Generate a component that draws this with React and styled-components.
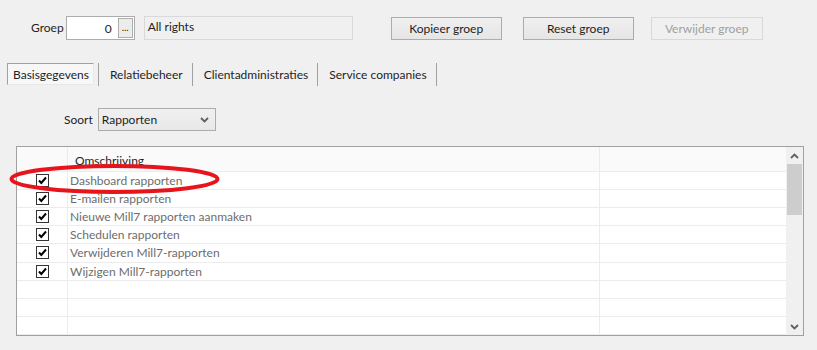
import React from 'react';
import styled, { createGlobalStyle } from 'styled-components';

const GlobalStyle = createGlobalStyle`
	body{
		margin: 0;
		background: #f0f0f0;
		font-family: Lato, "Noto Sans", sans-serif;
		font-size: 12px;
		color: #1e1e1e;
	}
`;

const Page = styled.div`
	width: 817px;
	height: 350px;
	padding-top: 16px;
	box-sizing: border-box;
	background: #f0f0f0;
`;

const TopRow = styled.div`
	display: flex;
	align-items: center;
	height: 24px;
	padding-left: 31px;
`;

const Label = styled.span`
	margin-right: ${p => p.gap || 3}px;
	line-height: 1;
`;

const NumberBox = styled.div`
	display: flex;
	align-items: center;
	justify-content: flex-end;
	width: 69px;
	height: 24px;
	box-sizing: border-box;
	border: 1px solid #acacac;
	background: #fff;
	padding: 1px;
	> .val{ margin-right: 6px; }
`;

const DotsButton = styled.div`
	width: 15px;
	height: 20px;
	box-sizing: border-box;
	border: 1px solid #adadad;
	background: #ececec;
	font-size: 10px;
	line-height: 16px;
	text-align: center;
`;

const ReadOnlyField = styled.div`
	width: 209px;
	height: 24px;
	margin-left: 9px;
	box-sizing: border-box;
	border: 1px solid #d9d9d9;
	padding-left: 3px;
	line-height: 20px;
`;

const Button = styled.div`
	width: ${p => p.w}px;
	height: 23px;
	margin-left: ${p => p.gap}px;
	box-sizing: border-box;
	border: 1px solid ${p => p.disabled ? '#d9d9d9' : '#acacac'};
	background: ${p => p.disabled ? '#f0f0f0' : 'linear-gradient(#f0f0f0, #e5e5e5)'};
	color: ${p => p.disabled ? '#a0a0a0' : '#1e1e1e'};
	text-align: center;
	line-height: 21px;
`;

const Tabs = styled.div`
	display: flex;
	align-items: stretch;
	height: 23px;
	margin-top: 23px;
	padding-left: 7px;
`;

const Tab = styled.div`
	display: flex;
	align-items: center;
	box-sizing: border-box;
	padding: ${p => p.active ? '0 4px 0 5px' : '0 9px 0 11px'};
	margin-right: ${p => p.active ? '4px' : '0'};
	border: ${p => p.active ? '1px solid #a0a0a0' : 'none'};
	border-right-color: ${p => p.active ? '#e8e8e8' : 'transparent'};
	border-bottom-color: ${p => p.active ? '#e8e8e8' : 'transparent'};
	background: ${p => p.active ? '#f7f7f7' : 'transparent'};
	height: ${p => p.active ? '22px' : '23px'};
	white-space: nowrap;
`;

const Sep = styled.div`
	width: 1px;
	background: #a0a0a0;
`;

const SortRow = styled.div`
	display: flex;
	align-items: center;
	margin-top: 22px;
	padding-left: 64px;
	height: 23px;
`;

const Select = styled.div`
	display: flex;
	align-items: center;
	justify-content: space-between;
	width: 118px;
	height: 23px;
	margin-left: 2px;
	box-sizing: border-box;
	border: 1px solid #acacac;
	background: linear-gradient(#f0f0f0, #e8e8e8);
	padding: 0 6px 0 3px;
`;

const GridWrap = styled.div`
	position: relative;
	margin: 15px 0 0 16px;
	width: 788px;
	height: 190px;
	box-sizing: border-box;
	border: 1px solid #a0a0a0;
	background: #fff;
	display: flex;
`;

const Table = styled.div`
	flex: 1;
	display: flex;
	flex-direction: column;
`;

const HeaderRow = styled.div`
	display: grid;
	grid-template-columns: 51px 532px 1fr;
	height: 24px;
	background: #fafafa;
	border-bottom: 1px solid #e6eef8;
	> div{ border-right: 1px solid #e3ecf8; }
	> div:last-child{ border-right: none; }
	> .title{
		padding-left: 7px;
		line-height: 28px;
	}
`;

const Row = styled.div`
	display: grid;
	grid-template-columns: 51px 532px 1fr;
	height: 18px;
	border-bottom: 1px solid #ececec;
	color: #6d6d6d;
	> div{ border-right: 1px solid #ececec; }
	> div:last-child{ border-right: none; }
	> .check{
		display: flex;
		align-items: center;
		justify-content: center;
		padding-left: 1px;
	}
	> .text{
		padding-left: 2px;
		line-height: 17px;
	}
`;

const CheckBox = styled.div`
	width: 13px;
	height: 13px;
	box-sizing: border-box;
	border: 1px solid #333;
	background: #fff;
	display: flex;
	align-items: center;
	justify-content: center;
`;

const Scrollbar = styled.div`
	width: 17px;
	background: #f0f0f0;
	display: flex;
	flex-direction: column;
	align-items: center;
	> .arrow{
		height: 17px;
		display: flex;
		align-items: center;
		justify-content: center;
	}
	> .thumb{
		width: 15px;
		height: 51px;
		background: #cdcdcd;
	}
	> .track{ flex: 1; }
`;

const Ellipse = styled.svg`
	position: absolute;
	left: -8px;
	top: 15px;
	overflow: visible;
	pointer-events: none;
`;

const Check = () => (
	<svg width="9" height="9" viewBox="0 0 9 9">
		<path d="M1 4.5 L3.3 7 L8 1.5" stroke="#000" strokeWidth="2" fill="none" />
	</svg>
);

const Chevron = ({ up }) => (
	<svg width="9" height="6" viewBox="0 0 9 6">
		<path d={up ? 'M1 5 L4.5 1.5 L8 5' : 'M1 1 L4.5 4.5 L8 1'} stroke="#606060" strokeWidth="1.8" fill="none" />
	</svg>
);

const items = [
	'Dashboard rapporten',
	'E-mailen rapporten',
	'Nieuwe Mill7 rapporten aanmaken',
	'Schedulen rapporten',
	'Verwijderen Mill7-rapporten',
	'Wijzigen Mill7-rapporten',
	null,
	null,
	null,
];

export default function App(){
	return (
		<Page>
			<GlobalStyle />
			<TopRow>
				<Label gap={2}>Groep</Label>
				<NumberBox>
					<span className='val'>0</span>
					<DotsButton>...</DotsButton>
				</NumberBox>
				<ReadOnlyField>All rights</ReadOnlyField>
				<Button w={111} gap={38}>Kopieer groep</Button>
				<Button w={111} gap={21}>Reset groep</Button>
				<Button w={112} gap={17} disabled>Verwijder groep</Button>
			</TopRow>
			<Tabs>
				<Tab active>Basisgegevens</Tab>
				<Sep />
				<Tab>Relatiebeheer</Tab>
				<Sep />
				<Tab>Clientadministraties</Tab>
				<Sep />
				<Tab>Service companies</Tab>
				<Sep />
			</Tabs>
			<SortRow>
				<Label gap={3}>Soort</Label>
				<Select>
					<span>Rapporten</span>
					<Chevron />
				</Select>
			</SortRow>
			<GridWrap>
				<Table>
					<HeaderRow>
						<div />
						<div className='title'>Omschrijving</div>
						<div />
					</HeaderRow>
					{items.map((t, i) => (
						<Row key={i}>
							<div className='check'>{t && <CheckBox><Check /></CheckBox>}</div>
							<div className='text'>{t}</div>
							<div />
						</Row>
					))}
				</Table>
				<Scrollbar>
					<div className='arrow'><Chevron up /></div>
					<div className='thumb' />
					<div className='track' />
					<div className='arrow'><Chevron /></div>
				</Scrollbar>
				<Ellipse width="212" height="34" viewBox="0 0 212 34">
					<ellipse cx="105.5" cy="17" rx="103" ry="13" stroke="#e8141c" strokeWidth="4" fill="none" />
				</Ellipse>
			</GridWrap>
		</Page>
	);
}
